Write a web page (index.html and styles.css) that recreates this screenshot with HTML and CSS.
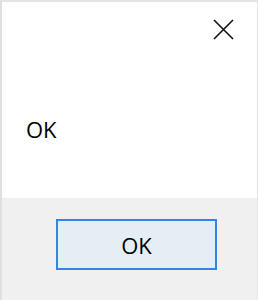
FILE: index.html
```html
<!DOCTYPE html>
<html>
<head>
<meta charset="utf-8">
<link rel="stylesheet" href="styles.css">
</head>
<body>
<div class="dialog">
  <div class="content">
    <div class="titlebar">
      <button class="close" aria-label="Close">
        <svg width="21" height="21" viewBox="0 0 21 21"><path d="M1 1 L20 20 M20 1 L1 20" stroke="#111" stroke-width="1.6" fill="none"/></svg>
      </button>
    </div>
    <p class="message">OK</p>
  </div>
  <div class="footer">
    <button class="ok">OK</button>
  </div>
</div>
</body>
</html>
```
FILE: styles.css
```css
html, body {
  margin: 0;
  padding: 0;
  background: #ffffff;
}
body {
  width: 258px;
  height: 300px;
  overflow: hidden;
  font-family: "Segoe UI", "Open Sans", "Noto Sans", sans-serif;
}
.dialog {
  box-sizing: border-box;
  width: 258px;
  height: 300px;
  border-top: 2px solid #e4e4e4;
  border-left: 2px solid #e0e0e0;
  border-right: 1px solid #e4e4e4;
  display: flex;
  flex-direction: column;
}
.content {
  height: 196px;
  background: #ffffff;
  display: flex;
  flex-direction: column;
}
.titlebar {
  display: flex;
  justify-content: flex-end;
  padding: 17px 23px 0 0;
}
.close {
  border: 0;
  background: transparent;
  padding: 0;
  width: 21px;
  height: 21px;
  display: flex;
}
.message {
  margin: 0;
  padding: 77px 0 0 24px;
  font-size: 22px;
  line-height: 24px;
  color: #000;
}
.footer {
  flex: 1;
  background: #f0f0f0;
  padding: 21px 0 0 54px;
}
.ok {
  box-sizing: border-box;
  width: 161px;
  height: 51px;
  border: 2px solid #3584e4;
  background: #e5edf5;
  font-family: inherit;
  font-size: 22px;
  color: #000;
  padding: 0;
}
```
